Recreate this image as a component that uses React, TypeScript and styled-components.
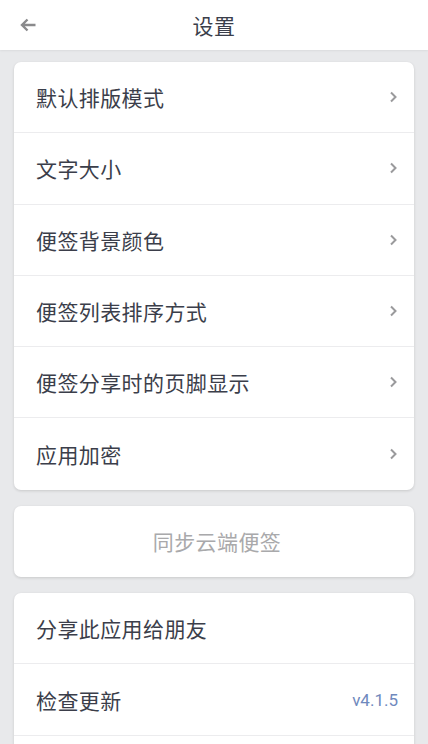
import * as React from 'react';
import styled, { createGlobalStyle } from 'styled-components';

const GlobalStyle = createGlobalStyle`
    html, body {
        margin: 0;
        padding: 0;
        background: #e8e9eb;
        font-family: "Noto Sans CJK SC", "Noto Sans", sans-serif;
    }
`;

const Page = styled.div`
    width: 428px;
    height: 744px;
    overflow: hidden;
    background: #e8e9eb;
`;

const Header = styled.div`
    position: relative;
    display: flex;
    align-items: center;
    justify-content: center;
    height: 50px;
    background: #fff;
    box-shadow: 0 1px 2px rgba(0, 0, 0, 0.06);
`;

const BackButton = styled.div`
    position: absolute;
    left: 18px;
    top: 15px;
    width: 20px;
    height: 20px;
`;

const Title = styled.div`
    font-size: 21px;
    color: #3b3e4a;
    letter-spacing: 0.4px;
`;

const Content = styled.div`
    display: flex;
    flex-direction: column;
    gap: 16px;
    padding: 12px 14px;
`;

const Card = styled.div`
    background: #fff;
    border-radius: 7px;
    box-shadow: 0 1px 3px rgba(0, 0, 0, 0.14);
    overflow: hidden;
`;

const Row = styled.div<{ centered?: boolean }>`
    display: flex;
    align-items: center;
    justify-content: ${(props) => (props.centered ? 'center' : 'space-between')};
    height: 71.3px;
    padding: 0 16px 0 22px;
    box-sizing: border-box;
    border-bottom: 1px solid #ececee;

    &:last-child {
        border-bottom: none;
    }
`;

const Label = styled.span<{ muted?: boolean }>`
    font-size: 21px;
    letter-spacing: 0.4px;
    color: ${(props) => (props.muted ? '#a9a9ab' : '#3b3e4a')};
`;

const Version = styled.span`
    font-family: Roboto, "Noto Sans", sans-serif;
    font-size: 17px;
    color: #6f89bd;
`;

const Chevron = () => (
    <svg width="10" height="12" viewBox="0 0 10 12">
        <path d="M3 1.5 L7.5 6 L3 10.5" fill="none" stroke="#9a9a9c" strokeWidth="2" />
    </svg>
);

const settings = [
    '默认排版模式',
    '文字大小',
    '便签背景颜色',
    '便签列表排序方式',
    '便签分享时的页脚显示',
    '应用加密'
];

export default function App() {
    return (
        <Page>
            <GlobalStyle />
            <Header>
                <BackButton>
                    <svg width="20" height="20" viewBox="0 0 20 20">
                        <path
                            d="M17.5 10 H4 M9.5 4.5 L4 10 L9.5 15.5"
                            fill="none"
                            stroke="#8a8a8c"
                            strokeWidth="2.4"
                        />
                    </svg>
                </BackButton>
                <Title>设置</Title>
            </Header>
            <Content>
                <Card>
                    {settings.map((name) => (
                        <Row key={name}>
                            <Label>{name}</Label>
                            <Chevron />
                        </Row>
                    ))}
                </Card>
                <Card>
                    <Row centered>
                        <Label muted>同步云端便签</Label>
                    </Row>
                </Card>
                <Card>
                    <Row>
                        <Label>分享此应用给朋友</Label>
                    </Row>
                    <Row>
                        <Label>检查更新</Label>
                        <Version>v4.1.5</Version>
                    </Row>
                    <Row />
                </Card>
            </Content>
        </Page>
    );
}
